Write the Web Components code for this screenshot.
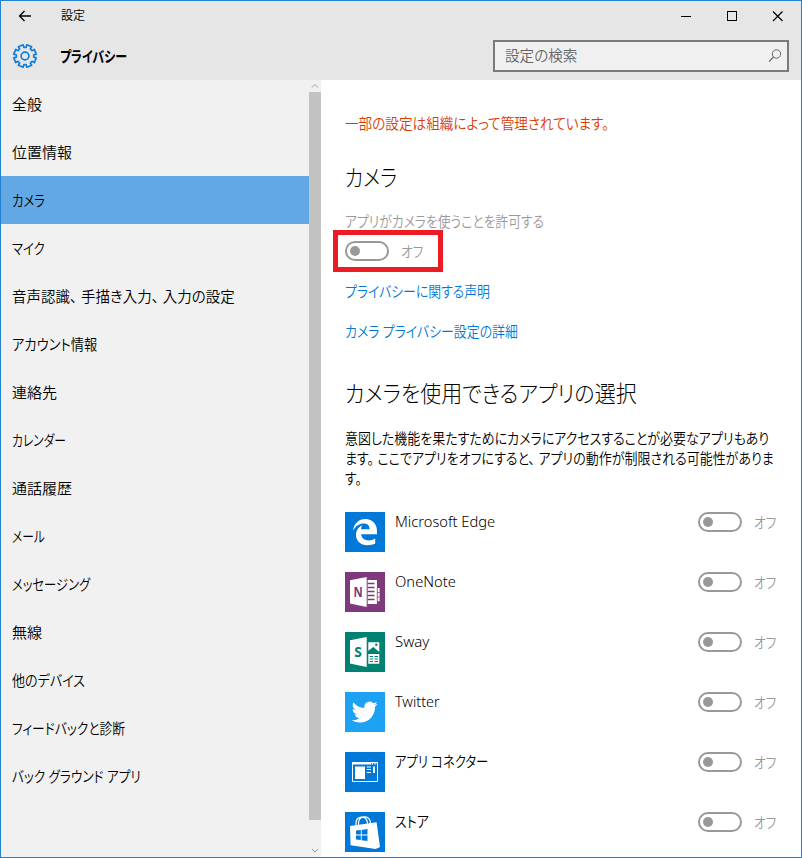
<!DOCTYPE html>
<html lang="ja">
<head>
<meta charset="utf-8">
<title>設定</title>
<style>
  html, body { margin: 0; height: 100%; overflow: hidden; }
  body { font-family: "Noto Sans", "Noto Sans CJK JP", sans-serif; font-weight: 350; color: #000; }
</style>
</head>
<body>
<settings-window></settings-window>

<script>
// One line of text, squeezed or stretched to the width given in "fit".
class UiText extends HTMLElement {
  connectedCallback() {
    this.attachShadow({ mode: 'open' });
    const fit = Number(this.getAttribute('fit'));
    this.shadowRoot.innerHTML = `
      <style>
        :host {
          display: block;
          flex: none;
          width: ${fit}px;
          white-space: nowrap;
          font-feature-settings: "palt";
        }
        span { display: inline-block; transform-origin: 0 50%; }
        ::slotted(i) { font-style: normal; margin-right: 4px; }
      </style>
      <span><slot></slot></span>
    `;
    const span = this.shadowRoot.querySelector('span');
    span.style.transform = `scaleX(${fit / span.offsetWidth})`;
  }
}

class ToggleSwitch extends HTMLElement {
  constructor() {
    super();
    this.attachShadow({ mode: 'open' });
    this.shadowRoot.innerHTML = `
      <style>
        :host {
          display: flex;
          align-items: center;
          gap: 12px;
          height: 20px;
          font-size: 15px;
          line-height: 20px;
          color: #999;
        }
        .track {
          box-sizing: border-box;
          display: flex;
          align-items: center;
          width: 44px;
          height: 20px;
          padding-left: 3px;
          border: 2px solid #999;
          border-radius: 10px;
        }
        .knob {
          width: 10px;
          height: 10px;
          border-radius: 50%;
          background: #999;
        }
      </style>
      <div class="track"><div class="knob"></div></div>
      <ui-text fit="22">オフ</ui-text>
    `;
  }
}

const LOGOS = {
  edge: ['#0078d7', `
    <path fill="#fff" d="M8 18.6C9 11.5 13.800 7 20.300 7C27.500 7 32 12 32 19V22.300H16.200C16.500 26.500 20 28.500 23.600 28.500C26 28.500 28.300 27.800 30.200 26.600V31.600C28 32.700 25.200 33.200 22.500 33.200C15.500 33.200 11 29 11 22.800C11 18.700 13.300 15.200 17.300 13.300C16.500 14.500 16.100 15.700 16 17.300H24.600C24.600 13.700 22.400 11.600 18.700 11.600C14.600 11.600 10.800 14.200 8 18.600Z"/>`],
  onenote: ['#80397b', `
    <path fill="#fff" d="M5 8.200L21.700 5V35L5 31.600Z"/>
    <text x="8.600" y="25.400" font-family="Open Sans, sans-serif" font-weight="700" font-size="15" textLength="9.200" lengthAdjust="spacingAndGlyphs" fill="#80397b">N</text>
    <path fill="#fff" d="M22.700 8H32V16H34.600V29.300H32V32H22.700Z"/>
    <path stroke="#80397b" stroke-width="1.300" fill="none" d="M22.700 11.500H29.500M22.700 15.500H29.500M22.700 19.500H29.500M22.700 23.500H29.500M22.700 27.500H29.500"/>
    <path stroke="#80397b" stroke-width=".800" fill="none" d="M32.300 16V29.500M32.300 20.500H34.600M32.300 25H34.600"/>`],
  sway: ['#008272', `
    <path fill="#fff" d="M5 8.200L21.700 5V35L5 31.600Z"/>
    <text x="9.300" y="25.300" font-family="Open Sans, sans-serif" font-weight="700" font-size="15" textLength="7.600" lengthAdjust="spacingAndGlyphs" fill="#008272">S</text>
    <path fill="#fff" d="M23.300 10.300H34.300V20L28.300 15L23.300 18.800Z M23.300 22H34.300V31.700H23.300Z"/>
    <circle cx="31.300" cy="12.800" r="1.200" fill="#008272"/>
    <path stroke="#008272" stroke-width="1.100" fill="none" d="M24.700 24.500H28M29.500 24.500H33M24.700 27H28M29.500 27H33M24.700 29.500H28M29.500 29.500H33"/>`],
  twitter: ['#1da1f2', `
    <path fill="#fff" transform="translate(6.700 7.100) scale(1.080)" d="M23.953 4.570a10 10 0 01-2.825.775 4.958 4.958 0 002.163-2.723c-.951.555-2.005.959-3.127 1.184a4.920 4.920 0 00-8.384 4.482C7.690 8.095 4.067 6.130 1.640 3.162a4.822 4.822 0 00-.666 2.475c0 1.710.870 3.213 2.188 4.096a4.904 4.904 0 01-2.228-.616v.060a4.923 4.923 0 003.946 4.827 4.996 4.996 0 01-2.212.085 4.936 4.936 0 004.604 3.417 9.867 9.867 0 01-6.102 2.105c-.390 0-.779-.023-1.170-.067a13.995 13.995 0 007.557 2.209c9.053 0 13.998-7.496 13.998-13.985 0-.210 0-.420-.015-.630A9.935 9.935 0 0024 4.590z"/>`],
  connector: ['#0078d7', `
    <path fill="none" stroke="#fff" d="M7.500 10.500H32.500V29.500H7.500Z"/>
    <path fill="none" stroke="#fff" stroke-width="2" d="M7 11.500H26"/>
    <path stroke="#fff" stroke-width="1.400" stroke-dasharray="1.300 1.200" d="M26.800 11.700H32"/>
    <path fill="#fff" d="M10 14.500H20V27H10ZM21.700 14.500H26V15.500H21.700ZM21.700 17H26V18H21.700ZM21.700 20H26V21H21.700ZM28 14.500H30V21H28Z"/>`],
  store: ['#0078d7', `
    <path fill="none" stroke="#fff" stroke-width="1.200" d="M11 14V11.500C11 3.500 20.500 3 22.400 10V12M13.500 13.500V11C14 3.500 23 3 25.200 9V12"/>
    <path fill="#fff" d="M5 14L31.600 10.200L35 35L30.700 37L5.600 33.300Z"/>
    <path fill="#0078d7" d="M11 18.600L15.800 18V22.600H11ZM16.700 17.900L22.500 17V22.600H16.700ZM11 23.500H15.800V28L11 27.400ZM16.700 23.500H22.500V29L16.700 28.200Z"/>`]
};

class AppRow extends HTMLElement {
  connectedCallback() {
    const [color, art] = LOGOS[this.getAttribute('logo')];
    this.attachShadow({ mode: 'open' });
    this.shadowRoot.innerHTML = `
      <style>
        :host {
          display: flex;
          align-items: flex-start;
          height: 40px;
          font-size: 15px;
          line-height: 18px;
        }
        .logo { flex: none; width: 40px; height: 40px; margin-right: 10px; background: ${color}; }
        toggle-switch { margin-left: auto; }
      </style>
      <svg class="logo" viewBox="0 0 40 40">${art}</svg>
      <slot></slot>
      <toggle-switch></toggle-switch>
    `;
  }
}

class NavItem extends HTMLElement {
  constructor() {
    super();
    this.attachShadow({ mode: 'open' });
    this.shadowRoot.innerHTML = `
      <style>
        :host {
          display: flex;
          align-items: center;
          height: 48px;
          padding-left: 11px;
          font-size: 15px;
          line-height: 20px;
        }
        :host([selected]) { background: #62a8e4; }
      </style>
      <slot></slot>
    `;
  }
}

const NAV = [
  ['全般', 30], ['位置情報', 60], ['カメラ', 33], ['マイク', 33],
  ['音声認識<i>、</i>手描き入力<i>、</i>入力の設定', 223], ['アカウント情報', 85],
  ['連絡先', 45], ['カレンダー', 54], ['通話履歴', 60], ['メール', 33],
  ['メッセージング', 78], ['無線', 30], ['他のデバイス', 73],
  ['フィードバックと診断', 113], ['バック グラウンド アプリ', 129]
];

class SettingsNav extends HTMLElement {
  constructor() {
    super();
    this.attachShadow({ mode: 'open' });
    this.shadowRoot.innerHTML = `
      <style>
        :host { display: flex; width: 320px; flex: none; background: #f1f1f1; }
        nav { flex: 1; }
        .bar { display: flex; flex-direction: column; width: 12px; }
        .bar svg { flex: none; display: block; }
        .thumb { height: 728px; background: #c2c2c2; }
        .rest { flex: 1; }
      </style>
      <nav>
        ${NAV.map(([text, fit]) => `<nav-item ${text === 'カメラ' ? 'selected' : ''}><ui-text fit="${fit}">${text}</ui-text></nav-item>`).join('')}
      </nav>
      <div class="bar">
        <svg width="12" height="12"><path d="M3 7.500L6 4.500L9 7.500" fill="none" stroke="#999"/></svg>
        <div class="thumb"></div>
        <div class="rest"></div>
        <svg width="12" height="12"><path d="M3 4L6 7L9 4" fill="none" stroke="#999"/></svg>
      </div>
    `;
  }
}

class SettingsHeader extends HTMLElement {
  constructor() {
    super();
    this.attachShadow({ mode: 'open' });
    this.shadowRoot.innerHTML = `
      <style>
        :host { display: block; height: 79px; background: #e6e6e6; }
        svg { display: block; flex: none; }
        .caption {
          display: flex;
          align-items: center;
          height: 30px;
          padding-left: 16px;
          font-size: 12px;
        }
        .caption ui-text { margin-left: 28px; line-height: 16px; }
        .buttons { display: flex; margin-left: auto; }
        .title {
          display: flex;
          align-items: center;
          height: 50px;
          padding: 0 12px 0 11px;
        }
        .title > ui-text { margin: -2px 0 0 22px; font-size: 15px; font-weight: 700; }
        .search {
          box-sizing: border-box;
          display: flex;
          align-items: center;
          justify-content: space-between;
          width: 296px;
          height: 32px;
          margin-left: auto;
          padding: 0 4px 0 10px;
          border: 2px solid #7a7a7a;
          background: #f0f0f0;
          color: #666;
          font-size: 15px;
          line-height: 20px;
        }
        .search ui-text { margin-top: -2px; }
      </style>
      <div class="caption">
        <svg width="16" height="16"><path d="M14 8H2.500M7.500 3L2.500 8L7.500 13" fill="none" stroke="#000" stroke-width="1.300"/></svg>
        <ui-text fit="24">設定</ui-text>
        <div class="buttons">
          <svg width="46" height="30"><path d="M12 15.500H22" stroke="#000"/></svg>
          <svg width="46" height="30"><rect x="12.500" y="10.500" width="9" height="9" fill="none" stroke="#000"/></svg>
          <svg width="40" height="30"><path d="M12 10.500L21.500 20M21.500 10.500L12 20" stroke="#000" stroke-width="1.200"/></svg>
        </div>
      </div>
      <div class="title">
        <svg width="26" height="26" viewBox="-13 -13 26 26" fill="none" stroke="#0f7fdb" stroke-width="1.700" stroke-linejoin="round">
          <path d="${this.gear()}"/><circle r="3.900"/>
        </svg>
        <ui-text fit="67">プライバシー</ui-text>
        <div class="search">
          <ui-text fit="72">設定の検索</ui-text>
          <svg width="16" height="16"><circle cx="9.500" cy="6" r="4.200" fill="none" stroke="#666"/><path d="M6.500 9L2 13.700" stroke="#666" stroke-width="1.200"/></svg>
        </div>
      </div>
    `;
  }

  // eight teeth, with a notch pointing straight up
  gear() {
    const points = [];
    for (let i = 0; i < 8; i++) {
      for (const [r, offset] of [[8.8, -15], [11.4, -13], [11.4, 13], [8.8, 15]]) {
        const a = (i * 45 + 22.5 + offset) * Math.PI / 180;
        points.push((r * Math.cos(a)).toFixed(2) + ' ' + (r * Math.sin(a)).toFixed(2));
      }
    }
    return 'M' + points.join('L') + 'Z';
  }
}

class CameraPage extends HTMLElement {
  constructor() {
    super();
    this.attachShadow({ mode: 'open' });
    this.shadowRoot.innerHTML = `
      <style>
        :host {
          display: block;
          flex: 1;
          min-width: 0;
          padding: 33px 25px 0 24px;
          background: #fff;
          font-size: 15px;
          line-height: 20px;
        }
        .notice { color: #da3b01; }
        .heading { margin-top: 28px; font-size: 23px; line-height: 32px; font-weight: 300; }
        .label { margin-top: 18px; color: #999; }
        .marked {
          box-sizing: border-box;
          display: flex;
          align-items: center;
          width: 110px;
          height: 42px;
          margin: -1px 0 9px -12px;
          padding-left: 7px;
          border: 5px solid #ed1c24;
        }
        .link { margin-bottom: 20px; color: #0078d7; }
        .apps-heading { margin: 36px 0 19px; font-size: 23px; line-height: 32px; font-weight: 300; }
        .apps { display: flex; flex-direction: column; gap: 20px; margin-top: 24px; }
      </style>
      <ui-text class="notice" fit="264">一部の設定は組織によって管理されています。</ui-text>
      <ui-text class="heading" fit="52">カメラ</ui-text>
      <ui-text class="label" fit="199">アプリがカメラを使うことを許可する</ui-text>
      <div class="marked"><toggle-switch></toggle-switch></div>
      <ui-text class="link" fit="145">プライバシーに関する声明</ui-text>
      <ui-text class="link" fit="173">カメラ プライバシー設定の詳細</ui-text>
      <ui-text class="apps-heading" fit="292">カメラを使用できるアプリの選択</ui-text>
      <ui-text fit="424">意図した機能を果たすためにカメラにアクセスすることが必要なアプリもあり</ui-text>
      <ui-text fit="429">ます<i>。</i>ここでアプリをオフにすると<i>、</i>アプリの動作が制限される可能性がありま</ui-text>
      <ui-text fit="17">す。</ui-text>
      <div class="apps">
        <app-row logo="edge"><ui-text fit="100">Microsoft Edge</ui-text></app-row>
        <app-row logo="onenote"><ui-text fit="61">OneNote</ui-text></app-row>
        <app-row logo="sway"><ui-text fit="34">Sway</ui-text></app-row>
        <app-row logo="twitter"><ui-text fit="45">Twitter</ui-text></app-row>
        <app-row logo="connector"><ui-text fit="93">アプリ コネクター</ui-text></app-row>
        <app-row logo="store"><ui-text fit="34">ストア</ui-text></app-row>
      </div>
    `;
  }
}

class SettingsWindow extends HTMLElement {
  constructor() {
    super();
    this.attachShadow({ mode: 'open' });
    this.shadowRoot.innerHTML = `
      <style>
        :host {
          box-sizing: border-box;
          display: flex;
          flex-direction: column;
          width: 802px;
          height: 858px;
          border: 1px solid #2382d0;
          overflow: hidden;
        }
        settings-header { flex: none; }
        .body { display: flex; flex: 1; min-height: 0; }
      </style>
      <settings-header></settings-header>
      <div class="body">
        <settings-nav></settings-nav>
        <camera-page></camera-page>
      </div>
    `;
  }
}

customElements.define('ui-text', UiText);
customElements.define('toggle-switch', ToggleSwitch);
customElements.define('app-row', AppRow);
customElements.define('nav-item', NavItem);
customElements.define('settings-nav', SettingsNav);
customElements.define('settings-header', SettingsHeader);
customElements.define('camera-page', CameraPage);
customElements.define('settings-window', SettingsWindow);
</script>
</body>
</html>
